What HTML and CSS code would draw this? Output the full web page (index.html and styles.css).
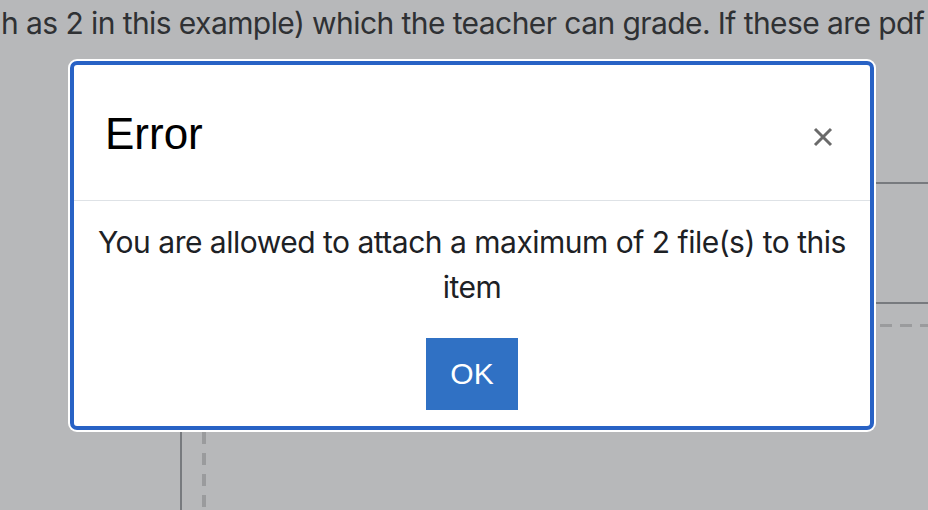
FILE: index.html
```html
<html>
  <head>
    <title>Error</title>
    <meta name="viewport" content="width=device-width, initial-scale=1.0" />
    <link rel="stylesheet" href="styles.css">
  </head>
  <body>
    <p class='page-text'>h as 2 in this example) which the teacher can grade. If these are pdf</p>
    <div class='rule rule-top'></div>
    <div class='rule rule-mid'></div>
    <div class='dash-h'></div>
    <div class='rule-v'></div>
    <div class='dash-v'></div>

    <div class='modal'>
      <div class='modal-header'>
        <h5 class='modal-title'>Error</h5>
        <span class='close'>
          <svg width='20' height='20' viewBox='0 0 20 20'>
            <path d='M2 2 L18 18 M18 2 L2 18' stroke='#6a6a6a' stroke-width='3' fill='none' />
          </svg>
        </span>
      </div>
      <div class='modal-body'>
        <p>You are allowed to attach a maximum of 2 file(s) to this item</p>
        <button class='btn'>OK</button>
      </div>
    </div>
  </body>
</html>
```

FILE: styles.css
```css
body {
  background:#b7b8ba;
  margin:0;
  overflow:hidden;
  width:928px;
  height:510px;
  position:relative;
  font-family:'Inter', 'Liberation Sans', sans-serif;
}

.page-text {
  margin:0;
  padding:5px 0 0 1px;
  color:#2f3134;
  font-size:30px;
  line-height:36px;
  white-space:nowrap;
  letter-spacing:-0.58px;
}

/* bits of the page behind the dialog */
.rule {
  position:absolute;
  left:876px;
  right:0;
  height:2px;
  background:#777a7e;
}

.rule-top { top:182px; }
.rule-mid { top:302px; }

.dash-h {
  position:absolute;
  left:880px;
  right:0;
  top:324px;
  height:3px;
  background:repeating-linear-gradient(90deg, #9a9b9d 0 12px, transparent 12px 20px);
}

.rule-v {
  position:absolute;
  left:180px;
  top:432px;
  bottom:0;
  width:2px;
  background:#777a7e;
}

.dash-v {
  position:absolute;
  left:202px;
  top:432px;
  bottom:0;
  width:4px;
  background:repeating-linear-gradient(180deg, #9a9b9d 0 12px, transparent 12px 21px);
}

.modal {
  position:absolute;
  left:70px;
  top:61px;
  width:796px;
  background:#fff;
  border:4px solid #2862c5;
  border-radius:7px;
  box-shadow:0 0 0 2px #fff;
}

.modal-header {
  display:flex;
  justify-content:space-between;
  align-items:flex-start;
  padding:43px 37px 40px 31px;
  border-bottom:1px solid #dee2e6;
}

.modal-title {
  margin:0;
  font:44px/52px 'Liberation Sans', Arial, sans-serif;
  color:#000;
}

.close {
  display:block;
  width:20px;
  height:20px;
  margin-top:19px;
}

.close svg {
  display:block;
}

.modal-body {
  display:flex;
  flex-direction:column;
  align-items:center;
  padding:19px 16px 16px;
}

.modal-body p {
  margin:0 0 28px;
  font-size:30px;
  line-height:45px;
  color:#1d2125;
  text-align:center;
  letter-spacing:-0.5px;
}

.btn {
  width:92px;
  height:72px;
  border:0;
  border-radius:0;
  background:#3071c4;
  color:#fff;
  font:30px 'Liberation Sans', Arial, sans-serif;
  padding:0;
}
```
